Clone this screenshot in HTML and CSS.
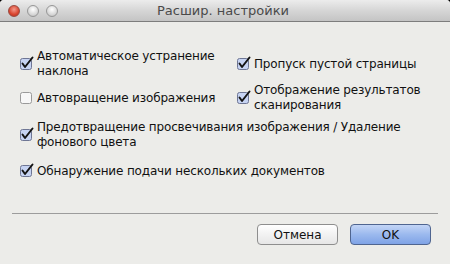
FILE: index.html
```html
<!DOCTYPE html>
<html lang="ru">
<head>
<meta charset="utf-8">
<title>Расшир. настройки</title>
<link rel="stylesheet" href="styles.css">
</head>
<body>
<div class="window">
  <div class="titlebar">
    <div class="lights">
      <span class="light red"></span>
      <span class="light gray"></span>
      <span class="light gray"></span>
    </div>
    <div class="title">Расшир. настройки</div>
  </div>
  <div class="content">
    <div class="grid">
      <label class="item">
        <svg class="cb" viewBox="0 0 14 14" width="14" height="14"><rect class="box on" x="0.5" y="2.5" width="11" height="11" rx="2"/><path class="tick" d="M2.5 7.5 L5 11 L12.5 1.5"/></svg>
        <span class="text">Автоматическое устранение<br>наклона</span>
      </label>
      <label class="item">
        <svg class="cb" viewBox="0 0 14 14" width="14" height="14"><rect class="box on" x="0.5" y="2.5" width="11" height="11" rx="2"/><path class="tick" d="M2.5 7.5 L5 11 L12.5 1.5"/></svg>
        <span class="text">Пропуск пустой страницы</span>
      </label>
      <label class="item">
        <svg class="cb" viewBox="0 0 14 14" width="14" height="14"><rect class="box off" x="0.5" y="2.5" width="11" height="11" rx="2"/></svg>
        <span class="text">Автовращение изображения</span>
      </label>
      <label class="item">
        <svg class="cb" viewBox="0 0 14 14" width="14" height="14"><rect class="box on" x="0.5" y="2.5" width="11" height="11" rx="2"/><path class="tick" d="M2.5 7.5 L5 11 L12.5 1.5"/></svg>
        <span class="text">Отображение результатов<br>сканирования</span>
      </label>
    </div>
    <label class="item wide">
      <svg class="cb" viewBox="0 0 14 14" width="14" height="14"><rect class="box on" x="0.5" y="2.5" width="11" height="11" rx="2"/><path class="tick" d="M2.5 7.5 L5 11 L12.5 1.5"/></svg>
      <span class="text">Предотвращение просвечивания изображения / Удаление<br>фонового цвета</span>
    </label>
    <label class="item wide last">
      <svg class="cb" viewBox="0 0 14 14" width="14" height="14"><rect class="box on" x="0.5" y="2.5" width="11" height="11" rx="2"/><path class="tick" d="M2.5 7.5 L5 11 L12.5 1.5"/></svg>
      <span class="text">Обнаружение подачи нескольких документов</span>
    </label>
    <div class="separator"></div>
    <div class="buttons">
      <button class="btn">Отмена</button>
      <button class="btn primary">OK</button>
    </div>
  </div>
</div>
</body>
</html>
```
FILE: styles.css
```css
html, body {
  margin: 0;
  padding: 0;
  background: #000;
}
body {
  font-family: "DejaVu Sans", "Liberation Sans", sans-serif;
  font-size: 12px;
  color: #111;
}
.window {
  width: 450px;
  height: 264px;
  background: #ecece9;
  border-radius: 4px 4px 0 0;
  overflow: hidden;
}
.titlebar {
  height: 21px;
  border-bottom: 1px solid #7d7d7d;
  background: linear-gradient(#ececec, #d6d6d6 50%, #c4c4c4);
  display: flex;
  align-items: center;
  position: relative;
}
.lights {
  display: flex;
  gap: 7px;
  padding-left: 8px;
  padding-top: 1px;
}
.light {
  width: 12px;
  height: 12px;
  border-radius: 50%;
  box-sizing: border-box;
}
.light.red {
  background: radial-gradient(circle at 50% 35%, #f39a8c, #d9452f 60%, #b23020);
  border: 1px solid #9a4a40;
}
.light.gray {
  background: radial-gradient(circle at 50% 35%, #ffffff, #d8d8d8 60%, #b8b8b8);
  border: 1px solid #979797;
}
.title {
  flex: 1;
  text-align: center;
  font-size: 13px;
  color: #4a4a4a;
  margin-right: 62px;
}
.content {
  padding: 27px 12px 0 20px;
}
.grid {
  display: grid;
  grid-template-columns: 217px auto;
  grid-template-rows: 30px 30px;
  row-gap: 4px;
  align-items: center;
}
.item {
  display: flex;
  align-items: center;
  gap: 3px;
  line-height: 15px;
  letter-spacing: -0.16px;
}
.cb {
  flex: none;
  margin-top: -3px;
}
.box.on {
  fill: #c6d3f2;
  stroke: #6e7694;
}
.box.off {
  fill: #f7f7f7;
  stroke: #9a9a9a;
}
.tick {
  fill: none;
  stroke: #141414;
  stroke-width: 2;
  stroke-linecap: round;
  stroke-linejoin: round;
}
.wide {
  margin-top: 7px;
}
.wide.last {
  margin-top: 14px;
}
.separator {
  margin: 34px 0 0 -8px;
  height: 1px;
  background: #9c9c9c;
  width: 426px;
}
.buttons {
  display: flex;
  justify-content: flex-end;
  gap: 12px;
  margin-top: 10px;
  padding-right: 7px;
}
.btn {
  width: 81px;
  height: 21px;
  border-radius: 4px;
  font-family: "DejaVu Sans", "Liberation Sans", sans-serif;
  font-size: 12px;
  color: #111;
  border: 1px solid #8e8e8e;
  background: linear-gradient(#ffffff, #f2f2f2 50%, #e6e6e6);
  padding: 0;
}
.btn.primary {
  border-color: #4f6590;
  background: linear-gradient(#c3d5f6, #9bb9ee 50%, #7fa3e6);
}
```
